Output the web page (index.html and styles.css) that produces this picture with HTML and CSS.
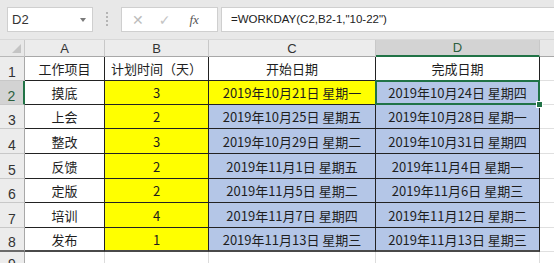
FILE: index.html
```html
<!DOCTYPE html>
<html lang="zh">
<head>
<meta charset="utf-8">
<link rel="stylesheet" href="styles.css">
</head>
<body>
<div class="app">
  <div class="toolbar">
    <div class="namebox"><span class="ref">D2</span><span class="caret"></span></div>
    <div class="grip"></div>
    <div class="fxbox">
      <span class="btn x">✕</span>
      <span class="btn ok">✓</span>
      <span class="btn fx">fx</span>
    </div>
    <div class="formula">=WORKDAY(C2,B2-1,"10-22")</div>
  </div>
  <div class="sheet">
    <div class="corner"><span class="tri"></span></div>
    <div class="ch">A</div><div class="ch">B</div><div class="ch">C</div><div class="ch sel">D</div><div class="ch rest"></div>

    <div class="rh">1</div>
    <div class="c w">工作项目</div><div class="c w left">计划时间（天）</div><div class="c w">开始日期</div><div class="c w">完成日期</div><div class="c out"></div>

    <div class="rh sel">2</div>
    <div class="c w">摸底</div><div class="c y">3</div><div class="c y">2019年10月21日 星期一</div><div class="c b active">2019年10月24日 星期四</div><div class="c out"></div>

    <div class="rh">3</div>
    <div class="c w">上会</div><div class="c y">2</div><div class="c b">2019年10月25日 星期五</div><div class="c b">2019年10月28日 星期一</div><div class="c out"></div>

    <div class="rh">4</div>
    <div class="c w">整改</div><div class="c y">3</div><div class="c b">2019年10月29日 星期二</div><div class="c b">2019年10月31日 星期四</div><div class="c out"></div>

    <div class="rh">5</div>
    <div class="c w">反馈</div><div class="c y">2</div><div class="c b">2019年11月1日 星期五</div><div class="c b">2019年11月4日 星期一</div><div class="c out"></div>

    <div class="rh">6</div>
    <div class="c w">定版</div><div class="c y">2</div><div class="c b">2019年11月5日 星期二</div><div class="c b">2019年11月6日 星期三</div><div class="c out"></div>

    <div class="rh">7</div>
    <div class="c w">培训</div><div class="c y">4</div><div class="c b">2019年11月7日 星期四</div><div class="c b">2019年11月12日 星期二</div><div class="c out"></div>

    <div class="rh last">8</div>
    <div class="c w last">发布</div><div class="c y last">1</div><div class="c b last">2019年11月13日 星期三</div><div class="c b last">2019年11月13日 星期三</div><div class="c out"></div>

    <div class="rh r9">9</div>
    <div class="e"></div><div class="e"></div><div class="e"></div><div class="e"></div><div class="e out"></div>
  </div>
</div>
</body>
</html>
```

FILE: styles.css
```css
* { box-sizing: border-box; }
html, body { margin: 0; padding: 0; }
body {
  width: 554px;
  height: 263px;
  overflow: hidden;
  background: #ffffff;
  font-family: "Noto Sans CJK SC", "Liberation Sans", sans-serif;
  color: #1e1e1e;
}
.app { display: flex; flex-direction: column; width: 554px; height: 263px; overflow: hidden; }

.toolbar {
  flex: 0 0 40px;
  height: 40px;
  background: #e8e8e8;
  display: flex;
  align-items: flex-start;
  padding-top: 7px;
  padding-left: 7px;
  border-bottom: 1px solid #d8d8d8;
}
.namebox {
  width: 86px;
  height: 25px;
  background: #ffffff;
  border: 1px solid #cfcfcf;
  display: flex;
  align-items: center;
  justify-content: space-between;
  padding: 0 6px 0 4px;
  font-size: 13px;
  font-family: "Liberation Sans", sans-serif;
  color: #333;
}
.caret {
  width: 0; height: 0;
  border-left: 3px solid transparent;
  border-right: 3px solid transparent;
  border-top: 4px solid #7a7a7a;
}
.grip {
  width: 1px;
  height: 14px;
  margin: 5px 13px 0 13px;
  border-left: 2px dotted #b4b4b4;
}
.fxbox {
  width: 97px;
  height: 25px;
  background: #ffffff;
  border: 1px solid #cfcfcf;
  display: flex;
  align-items: center;
  padding-left: 10px;
  gap: 15px;
}
.btn { color: #bcbcbc; font-size: 14px; font-family: "DejaVu Sans", sans-serif; }
.btn.ok { color: #c4c4c4; }
.btn.fx {
  margin-left: 4px;
  color: #555;
  font-family: "Liberation Serif", serif;
  font-style: italic;
  font-size: 13px;
}
.formula {
  flex: 1;
  height: 25px;
  margin-left: 3px;
  background: #ffffff;
  border: 1px solid #cfcfcf;
  border-right: none;
  padding-left: 9px;
  font-size: 11.5px;
  line-height: 23px;
  font-family: "Liberation Sans", sans-serif;
  color: #222;
}

.sheet {
  flex: 1 1 auto;
  min-height: 0;
  overflow: hidden;
  display: grid;
  grid-template-columns: 25px 80px 104px 167px 164px 1fr;
  grid-template-rows: 17px 24px 24px 24px 25px 25px 24px 25px 24px 24px;
  background: #ffffff;
}
.corner {
  background: #e8e8e8;
  border-right: 1px solid #c8c8c8;
  border-bottom: 1px solid #b8b8b8;
  position: relative;
}
.tri {
  position: absolute;
  right: 3px; bottom: 3px;
  width: 0; height: 0;
  border-left: 9px solid transparent;
  border-bottom: 9px solid #c4c4c4;
}
.ch {
  background: #ececec;
  border-right: 1px solid #c8c8c8;
  border-bottom: 1px solid #a8a8a8;
  font-size: 13px;
  font-family: "Liberation Sans", sans-serif;
  color: #333;
  display: flex;
  align-items: center;
  justify-content: center;
  line-height: 1;
}
.ch.sel {
  background: #d3d3d3;
  color: #2c5f3e;
  border-bottom: 2px solid #217346;
}
.ch.rest { background: #e8e8e8; border-right: none; }

.rh {
  background: #ececec;
  border-right: 1px solid #a8a8a8;
  border-bottom: 1px solid #c8c8c8;
  font-size: 14px;
  font-family: "Liberation Sans", sans-serif;
  color: #333;
  display: flex;
  align-items: flex-end;
  justify-content: center;
  padding-bottom: 0;
  line-height: 16px;
}
.rh.r9 { align-items: flex-start; padding-top: 4px; }
.rh.sel {
  background: #d3d3d3;
  color: #2c5f3e;
  border-right: 2px solid #217346;
}
.rh.last { border-bottom: 2px solid #6a6a6a; }

.c {
  border-right: 1px solid #222;
  border-bottom: 1px solid #222;
  font-size: 13px;
  display: flex;
  align-items: center;
  justify-content: center;
  white-space: nowrap;
  color: #1e1e1e;
  line-height: 1;
}
.c.w { background: #ffffff; }
.c.y { background: #ffff00; }
.c.b { background: #b4c6e7; }
.c.left { justify-content: flex-start; padding-left: 6px; }
.c.last { border-bottom: 2px solid #4a4a4a; }
.c.out {
  background: #ffffff;
  border-right: none;
  border-bottom: 1px solid #e0e0e0;
}
.c.active { position: relative; }
.c.active::before {
  content: "";
  position: absolute;
  left: -1px; top: -1px; right: -1px; bottom: -1px;
  border: 2px solid #217346;
}
.c.active::after {
  content: "";
  position: absolute;
  right: -4px; bottom: -4px;
  width: 5px; height: 5px;
  background: #217346;
  border: 1px solid #ffffff;
}
.e {
  background: #ffffff;
  border-right: 1px solid #dcdcdc;
}
.e.out { border-right: none; }
```
